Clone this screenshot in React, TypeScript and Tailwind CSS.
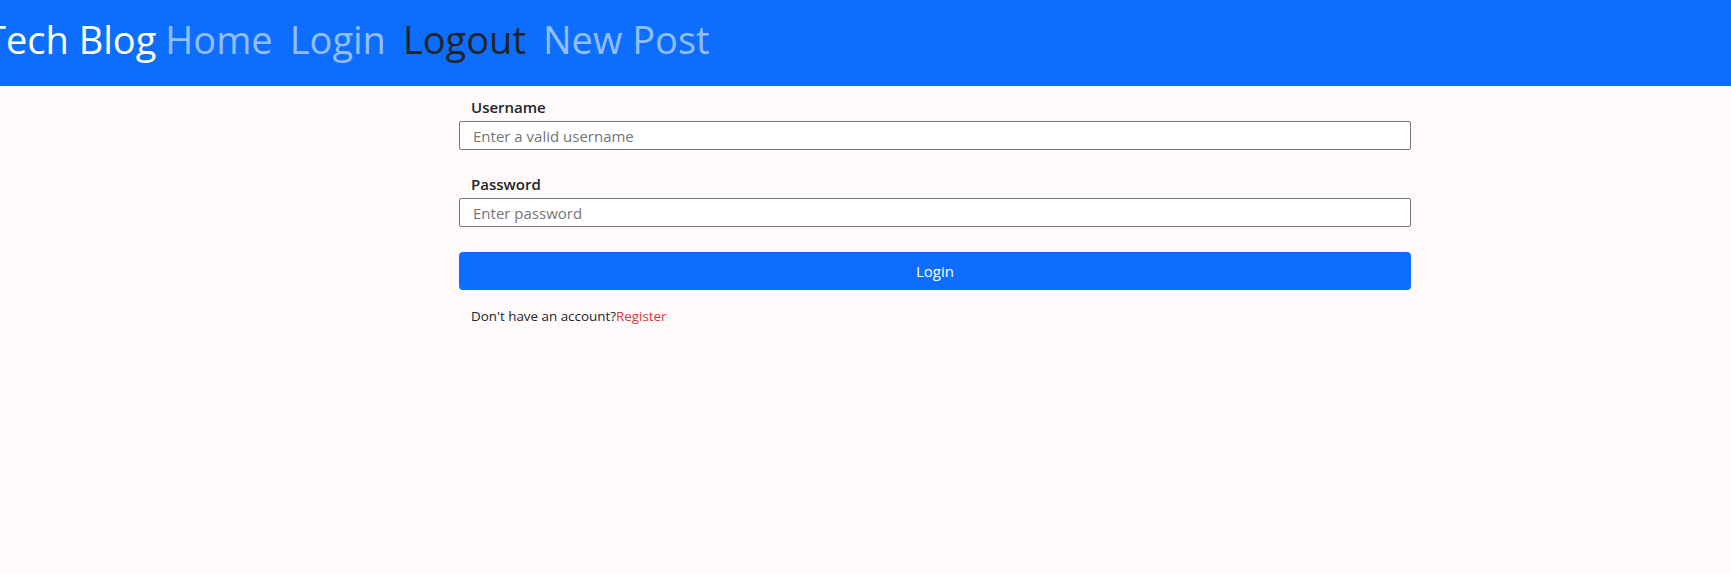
import React from "react";

export default function App() {
  return (
    <div className="min-h-[574px] w-full bg-[#fffafa] font-['Open_Sans',sans-serif] text-[#212529]">
      <nav className="flex h-[86px] items-center bg-[#0d6efd] overflow-hidden">
        <div className="ml-[-15px] flex items-center pb-[9px] text-[38px] leading-none">
          <span className="mr-[9px] text-white">Tech Blog</span>
          <div className="flex items-center gap-[17px]">
            <a className="text-[#92befe]">Home</a>
            <a className="text-[#92befe]">Login</a>
            <a className="text-[#212529]">Logout</a>
            <a className="text-[#92befe]">New Post</a>
          </div>
        </div>
      </nav>
      <form className="ml-[459px] w-[952px] pt-[9px]">
        <label className="block px-3 text-[15px] font-semibold leading-[24px]">Username</label>
        <input
          className="mt-[2px] block h-[29px] w-full rounded-[2px] border border-[#767676] bg-white px-[13px] text-[15px] placeholder:text-[#757575] outline-none"
          placeholder="Enter a valid username"
        />
        <label className="mt-[22px] block px-3 text-[15px] font-semibold leading-[24px]">Password</label>
        <input
          type="password"
          className="mt-[2px] block h-[29px] w-full rounded-[2px] border border-[#767676] bg-white px-[13px] text-[15px] placeholder:text-[#757575] outline-none"
          placeholder="Enter password"
        />
        <button
          type="button"
          className="mt-[25px] block h-[38px] w-full rounded-[4px] bg-[#0d6efd] text-[15px] text-white"
        >
          Login
        </button>
        <p className="mt-[16px] px-3 text-[13.4px] leading-[20px]">
          Don't have an account?<a className="text-[#dc3545]">Register</a>
        </p>
      </form>
    </div>
  );
}
